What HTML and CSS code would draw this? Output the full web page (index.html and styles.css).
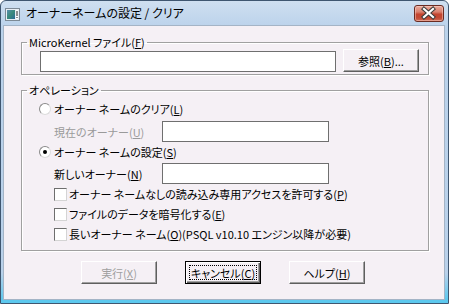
FILE: index.html
```html
<!DOCTYPE html>
<html lang="ja">
<head>
<meta charset="utf-8">
<title>オーナーネームの設定 / クリア</title>
<link rel="stylesheet" href="styles.css">
</head>
<body>
<div class="window">
  <div class="titlebar">
    <svg class="app-icon" width="15" height="13" viewBox="0 0 15 13">
      <defs>
        <linearGradient id="scr" x1="0" y1="0" x2="1" y2="1">
          <stop offset="0" stop-color="#5a8fb0"/>
          <stop offset="0.5" stop-color="#3a8a7a"/>
          <stop offset="1" stop-color="#2c6a98"/>
        </linearGradient>
      </defs>
      <rect x="0.5" y="0.5" width="14" height="12" fill="#e8eef4" stroke="#7d8a96"/>
      <rect x="2" y="2" width="8" height="9" fill="url(#scr)"/>
      <rect x="11" y="2" width="2" height="9" fill="#ffffff"/>
      <rect x="11.5" y="3" width="1" height="5" fill="#202020"/>
      <rect x="11.5" y="9" width="1" height="1" fill="#202020"/>
    </svg>
    <span class="title">オーナーネームの設定 / クリア</span>
    <div class="close-btn">
      <svg width="29" height="17" viewBox="0 0 29 17">
        <path d="M10 4 L19 12 M19 4 L10 12" stroke="#3a3a3a" stroke-width="4.2" stroke-linecap="square"/>
        <path d="M10 4 L19 12 M19 4 L10 12" stroke="#ffffff" stroke-width="2.2" stroke-linecap="square"/>
      </svg>
    </div>
  </div>
  <div class="client">
    <fieldset class="group group-file">
      <legend>MicroKernel ファイル(<u>F</u>)</legend>
      <div class="file-row">
        <div class="field field-file"></div>
        <div class="btn"><span class="btn-label">参照(<u>B</u>)...</span></div>
      </div>
    </fieldset>
    <fieldset class="group group-op">
      <legend>オペレーション</legend>
      <div class="op-body">
        <div class="radio-row"><span class="radio"></span><span>オーナー ネームのクリア(<u>L</u>)</span></div>
        <div class="field-row disabled"><span class="field-label">現在のオーナー(<u>U</u>)</span><div class="field field-owner"></div></div>
        <div class="radio-row"><span class="radio checked"></span><span>オーナー ネームの設定(<u>S</u>)</span></div>
        <div class="field-row field-row-new"><span class="field-label">新しいオーナー(<u>N</u>)</span><div class="field field-owner"></div></div>
        <div class="check-row"><span class="check"></span><span>オーナー ネームなしの読み込み専用アクセスを許可する(<u>P</u>)</span></div>
        <div class="check-row"><span class="check"></span><span>ファイルのデータを暗号化する(<u>E</u>)</span></div>
        <div class="check-row"><span class="check"></span><span>長いオーナー ネーム(<u>O</u>)(PSQL v10.10 エンジン以降が必要)</span></div>
      </div>
    </fieldset>
    <div class="buttons">
      <div class="btn disabled"><span class="btn-label">実行(<u>X</u>)</span></div>
      <div class="btn default"><span class="focus">キャンセル(<u>C</u>)</span></div>
      <div class="btn"><span class="btn-label">ヘルプ(<u>H</u>)</span></div>
    </div>
  </div>
</div>
</body>
</html>
```

FILE: styles.css
```css
* { box-sizing: border-box; }
html, body { margin: 0; padding: 0; background: #ffffff; }
body {
  font-family: "Noto Sans CJK JP", "Noto Sans", sans-serif;
  font-size: 11px;
  line-height: 14px;
  color: #000;
  font-feature-settings: "palt";
  white-space: nowrap;
}
u { text-decoration: underline; text-underline-offset: 1px; }

.window {
  width: 449px;
  height: 304px;
  display: flex;
  flex-direction: column;
  border: 1px solid #3f5670;
  border-radius: 6px 6px 0 0;
  padding: 0 3px 3px 2px;
  background: linear-gradient(to bottom, #cfdff0 0%, #bad2eb 9%, #b9d1ea 90%, #5cc8ee 99%);
}

.titlebar {
  height: 24px;
  display: flex;
  align-items: flex-start;
  flex: none;
}
.app-icon { margin: 7px 0 0 2px; flex: none; }
.title {
  margin: 5px 0 0 6px;
  font-size: 12px;
  line-height: 14px;
  color: #000;
  flex: 1;
}
.close-btn {
  width: 30px;
  height: 17px;
  margin: 4px 1px 0 0;
  border: 1px solid #6a2b22;
  border-radius: 3px;
  background: linear-gradient(to bottom, #e9aa9c 0%, #d9806e 40%, #c3442f 55%, #c24a35 80%, #d2705a 100%);
  box-shadow: inset 0 0 0 1px rgba(255,220,210,0.45);
  display: flex;
  align-items: center;
  justify-content: center;
  flex: none;
}
.close-btn svg { display: block; margin-left: -1px; }

.client {
  flex: 1;
  border: 1px solid #a4b4c6;
  background: #f5f0f5;
  display: flex;
  flex-direction: column;
}

.group {
  margin: 9px 15px 0 17px;
  padding: 0;
  border: 1px solid #a0a0a0;
  box-shadow: 1px 1px 0 #ffffff, inset 1px 1px 0 #ffffff;
  min-width: 0;
}
.group legend {
  margin-left: 5px;
  padding: 0 2px;
  line-height: 14px;
}
.group-op { margin-top: 8px; }

.file-row {
  display: flex;
  align-items: flex-end;
  padding: 0 8px 2px 18px;
  gap: 7px;
}
.field {
  background: #fff;
  border: 1px solid #6f6f6f;
  height: 21px;
}
.field-file { width: 296px; }

.btn {
  width: 76px;
  height: 23px;
  border: 1px solid;
  border-color: #ffffff #5f5f5f #5f5f5f #ffffff;
  box-shadow: inset -1px -1px 0 #a0a0a0;
  background: #f5f0f5;
  display: flex;
  align-items: center;
  justify-content: center;
  flex: none;
}
.btn.disabled { color: #a0a0a0; }
.btn.default {
  border: 1px solid #000;
  box-shadow: inset 1px 1px 0 #ffffff, inset -1px -1px 0 #5f5f5f, inset -2px -2px 0 #a0a0a0;
  padding: 3px;
  align-items: stretch;
}
.focus {
  flex: 1;
  border: 1px dotted #000;
  display: flex;
  align-items: center;
  justify-content: center;
}

.op-body {
  padding: 2px 0 6px 0;
  display: flex;
  flex-direction: column;
}
.radio-row {
  height: 20px;
  display: flex;
  align-items: center;
  padding-left: 17px;
  gap: 3px;
}
.radio {
  width: 12px;
  height: 12px;
  border-radius: 50%;
  border: 1px solid;
  border-color: #8a8a8a #dcdcdc #dcdcdc #8a8a8a;
  background: #fff;
  display: flex;
  align-items: center;
  justify-content: center;
  flex: none;
}
.radio.checked::after {
  content: "";
  width: 4px;
  height: 4px;
  border-radius: 50%;
  background: #000;
}
.field-row {
  display: flex;
  align-items: center;
  padding-left: 32px;
  margin-top: 2px;
}
.field-row-new { margin-top: 1px; }
.field-row.disabled .field-label { color: #9a9a9a; }
.field-label { width: 108px; flex: none; }
.field-owner { width: 167px; }

.check-row {
  height: 20px;
  display: flex;
  align-items: center;
  padding-left: 32px;
  gap: 2px;
}
.check {
  width: 13px;
  height: 13px;
  background: #fff;
  border: 1px solid;
  border-color: #6e6e6e #d4d4d4 #d4d4d4 #6e6e6e;
  flex: none;
}

.buttons {
  display: flex;
  gap: 28px;
  padding-left: 77px;
  margin-top: 10px;
}
```
